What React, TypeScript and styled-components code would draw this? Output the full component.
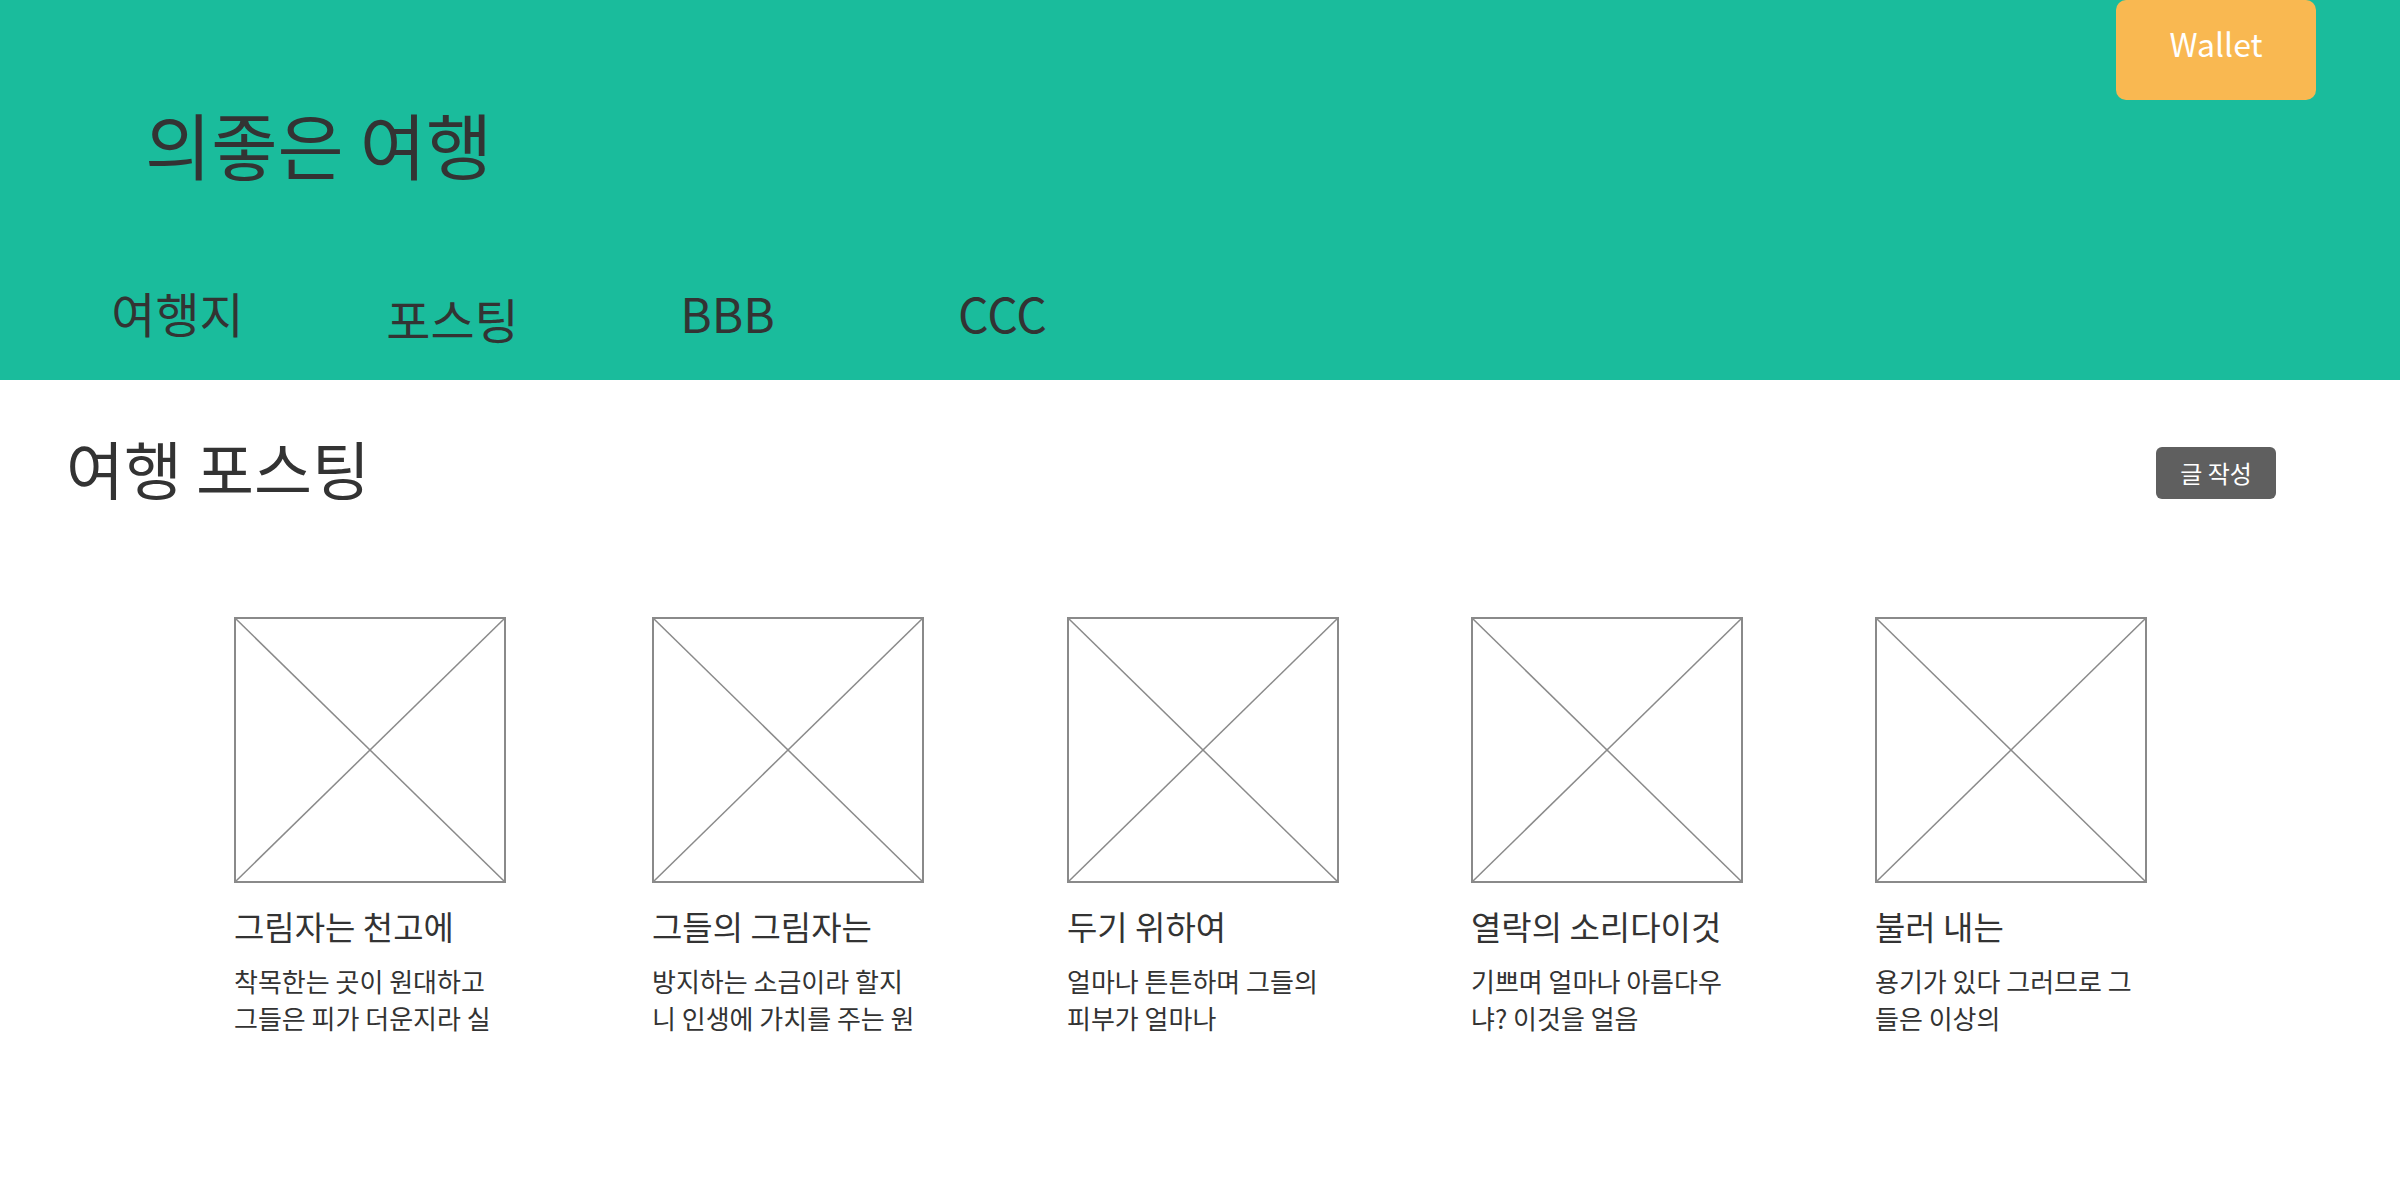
import React from "react";
import styled, { createGlobalStyle } from "styled-components";

const GlobalStyle = createGlobalStyle`
  html, body { margin: 0; padding: 0; background: #fff; }
  body {
    font-family: "Noto Sans CJK KR", "Noto Sans", sans-serif;
    color: #333;
  }
  * { box-sizing: border-box; }
`;

const Header = styled.header`
  background: #1abc9c;
  height: 380px;
  display: flex;
  flex-direction: column;
`;

const TopRow = styled.div`
  display: flex;
  justify-content: space-between;
  align-items: flex-start;
  padding: 0 84px 0 145px;
`;

const SiteTitle = styled.h1`
  margin: 107px 0 0;
  font-size: 72px;
  font-weight: 400;
  line-height: 1;
  color: #333;
`;

const WalletButton = styled.button`
  width: 200px;
  height: 100px;
  border: none;
  border-radius: 10px;
  background: #f9b851;
  color: #fff;
  font-family: inherit;
  font-size: 32px;
  line-height: 1;
  padding: 27px 0 0;
  display: flex;
  justify-content: center;
  align-items: flex-start;
  cursor: pointer;
`;

const Nav = styled.nav`
  display: flex;
  padding-left: 40px;
  margin-top: 109px;
`;

const NavItem = styled.a<{ $drop?: number }>`
  width: 275px;
  text-align: center;
  font-size: 48px;
  line-height: 1;
  color: #333;
  text-decoration: none;
  padding-top: ${(p) => p.$drop ?? 0}px;
`;

const Main = styled.main`
  padding: 55px 124px 80px 66px;
`;

const SectionHead = styled.div`
  display: flex;
  justify-content: space-between;
  align-items: flex-start;
`;

const SectionTitle = styled.h2`
  margin: 0;
  font-size: 63px;
  font-weight: 400;
  line-height: 1;
  color: #333;
`;

const WriteButton = styled.button`
  margin-top: 12px;
  width: 120px;
  height: 52px;
  border: none;
  border-radius: 6px;
  background: #5f5f5f;
  color: #fff;
  font-family: inherit;
  font-size: 24px;
  line-height: 1;
  cursor: pointer;
`;

const CardGrid = styled.div<{ $tracks: string }>`
  display: grid;
  grid-template-columns: ${(p) => p.$tracks};
  margin: 118px 0 0 168px;
`;

const Card = styled.article`
  display: flex;
  flex-direction: column;
`;

const Thumb = styled.div`
  width: 272px;
  height: 266px;
  border: 2px solid #8a8a8a;
  svg {
    display: block;
    width: 100%;
    height: 100%;
  }
`;

const CardTitle = styled.h3`
  margin: 25px 0 0;
  font-size: 33px;
  font-weight: 400;
  line-height: 36px;
  color: #333;
`;

const CardText = styled.p`
  margin: 18px 0 0;
  width: 272px;
  font-size: 26px;
  line-height: 37px;
  color: #333;
`;

const navItems = [
  { label: "여행지", drop: 0 },
  { label: "포스팅", drop: 6 },
  { label: "BBB", drop: 0 },
  { label: "CCC", drop: 0 },
];

const posts = [
  { title: "그림자는 천고에", text: "착목한는 곳이 원대하고 그들은 피가 더운지라 실" },
  { title: "그들의 그림자는", text: "방지하는 소금이라 할지니 인생에 가치를 주는 원" },
  { title: "두기 위하여", text: "얼마나 튼튼하며 그들의 피부가 얼마나" },
  { title: "열락의 소리다이것", text: "기쁘며 얼마나 아름다우냐? 이것을 얼음" },
  { title: "불러 내는", text: "용기가 있다 그러므로 그들은 이상의" },
];

const columnWidths = [418, 415, 404, 404, 272];

const Placeholder = () => (
  <Thumb>
    <svg viewBox="0 0 100 100" preserveAspectRatio="none">
      <line x1="0" y1="0" x2="100" y2="100" stroke="#8a8a8a" strokeWidth="1.5" vectorEffect="non-scaling-stroke" />
      <line x1="100" y1="0" x2="0" y2="100" stroke="#8a8a8a" strokeWidth="1.5" vectorEffect="non-scaling-stroke" />
    </svg>
  </Thumb>
);

export default function App() {
  return (
    <>
      <GlobalStyle />
      <Header>
        <TopRow>
          <SiteTitle>의좋은 여행</SiteTitle>
          <WalletButton>Wallet</WalletButton>
        </TopRow>
        <Nav>
          {navItems.map((n) => (
            <NavItem key={n.label} href="#" $drop={n.drop}>
              {n.label}
            </NavItem>
          ))}
        </Nav>
      </Header>
      <Main>
        <SectionHead>
          <SectionTitle>여행 포스팅</SectionTitle>
          <WriteButton>글 작성</WriteButton>
        </SectionHead>
        <CardGrid $tracks={columnWidths.map((w) => `${w}px`).join(" ")}>
          {posts.map((p) => (
            <Card key={p.title}>
              <Placeholder />
              <CardTitle>{p.title}</CardTitle>
              <CardText>{p.text}</CardText>
            </Card>
          ))}
        </CardGrid>
      </Main>
    </>
  );
}
